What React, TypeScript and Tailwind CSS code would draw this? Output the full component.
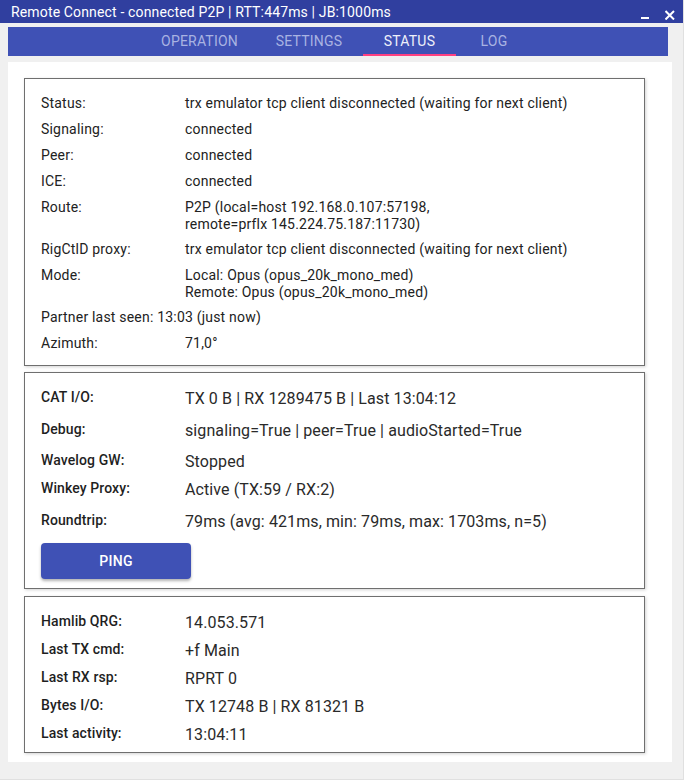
import React from "react";

const p1: { l: string; v: string[] }[] = [
  { l: "Status:", v: ["trx emulator tcp client disconnected (waiting for next client)"] },
  { l: "Signaling:", v: ["connected"] },
  { l: "Peer:", v: ["connected"] },
  { l: "ICE:", v: ["connected"] },
  { l: "Route:", v: ["P2P (local=host 192.168.0.107:57198,", "remote=prflx 145.224.75.187:11730)"] },
  { l: "RigCtlD proxy:", v: ["trx emulator tcp client disconnected (waiting for next client)"] },
  { l: "Mode:", v: ["Local: Opus (opus_20k_mono_med)", "Remote: Opus (opus_20k_mono_med)"] },
];

const p2: { l: string; v: string; h: string }[] = [
  { l: "CAT I/O:", v: "TX 0 B | RX 1289475 B | Last 13:04:12", h: "h-[32px]" },
  { l: "Debug:", v: "signaling=True | peer=True | audioStarted=True", h: "h-[31px]" },
  { l: "Wavelog GW:", v: "Stopped", h: "h-[28px]" },
  { l: "Winkey Proxy:", v: "Active (TX:59 / RX:2)", h: "h-[32px]" },
  { l: "Roundtrip:", v: "79ms (avg: 421ms, min: 79ms, max: 1703ms, n=5)", h: "h-[31px]" },
];

const p3: { l: string; v: string }[] = [
  { l: "Hamlib QRG:", v: "14.053.571" },
  { l: "Last TX cmd:", v: "+f Main" },
  { l: "Last RX rsp:", v: "RPRT 0" },
  { l: "Bytes I/O:", v: "TX 12748 B | RX 81321 B" },
  { l: "Last activity:", v: "13:04:11" },
];

const tabs = [
  { t: "OPERATION", w: "w-[111px]" },
  { t: "SETTINGS", w: "w-[108px]" },
  { t: "STATUS", w: "w-[93px]", active: true },
  { t: "LOG", w: "w-[76px]" },
];

export default function App() {
  return (
    <div className="w-[684px] h-[780px] bg-[#f0f0f0] flex flex-col overflow-hidden border-r border-b border-[#e0e0e0] font-['Roboto','Noto_Sans',sans-serif]">
      {/* Title bar */}
      <div className="h-[23px] bg-[#303f9f] flex items-center justify-between pl-[11px] pr-[8px] text-white shrink-0">
        <span className="text-[14px] tracking-[0.15px] leading-none">
          Remote Connect - connected P2P | RTT:447ms | JB:1000ms
        </span>
        <div className="flex items-center gap-[15px]">
          <svg width="9" height="16" viewBox="0 0 9 16">
            <rect x="0" y="13" width="8" height="2" fill="white" />
          </svg>
          <svg width="10" height="16" viewBox="0 0 10 16">
            <path d="M0.5 7.5 L9 16 M9 7.5 L0.5 16" transform="translate(0,-0.5)" stroke="white" strokeWidth="2" />
          </svg>
        </div>
      </div>

      {/* Tab bar */}
      <div className="mt-[4px] ml-[8px] w-[660px] h-[29px] bg-[#3f51b5] flex justify-center shrink-0">
        {tabs.map((t) => (
          <div
            key={t.t}
            className={`${t.w} h-full relative flex items-center justify-center text-[14px] tracking-[0.2px] ${
              t.active ? "text-[#eef0fa]" : "text-[#a9b3e2]"
            }`}
          >
            {t.t}
            {t.active && <div className="absolute left-0 right-0 bottom-0 h-[2px] bg-[#ff4081]" />}
          </div>
        ))}
      </div>

      {/* Content */}
      <div className="mt-[6px] ml-[8px] w-[664px] h-[700px] bg-white pt-[16px] pl-[16px] shrink-0">
        {/* Panel 1 */}
        <div className="w-[621px] h-[288px] border border-[#6f6f6f] shadow-[1px_1px_3px_rgba(0,0,0,0.18)] pt-[16px] pl-[16px] text-[14px] leading-[17px] tracking-[0.2px] text-[#222]">
          <div className="flex flex-col gap-[9px]">
            {p1.map((r) => (
              <div key={r.l} className="flex">
                <div className="w-[144px] shrink-0">{r.l}</div>
                <div className={`flex flex-col ${r.v.length > 1 ? "leading-[16.5px]" : ""}`}>
                  {r.v.map((x) => (
                    <span key={x}>{x}</span>
                  ))}
                </div>
              </div>
            ))}
            <div>Partner last seen: 13:03 (just now)</div>
            <div className="flex">
              <div className="w-[144px] shrink-0">Azimuth:</div>
              <div>71,0°</div>
            </div>
          </div>
        </div>

        {/* Panel 2 */}
        <div className="mt-[6px] w-[621px] h-[217px] border border-[#6f6f6f] shadow-[1px_1px_3px_rgba(0,0,0,0.18)] pt-[16px] pl-[16px] text-[#222]">
          {p2.map((r) => (
            <div key={r.l} className={`flex items-start ${r.h}`}>
              <div className="w-[144px] shrink-0 text-[14px] leading-[16px] font-medium tracking-[0.1px] text-[#1f1f1f]">
                {r.l}
              </div>
              <div className="text-[16px] leading-[19px] tracking-[0.1px] text-[#2a2a2a]">{r.v}</div>
            </div>
          ))}
          <button className="w-[150px] h-[36px] rounded-[4px] bg-[#3f51b5] text-white text-[14px] font-medium tracking-[0.3px] shadow-[0_2px_3px_rgba(0,0,0,0.3)] flex items-center justify-center">
            PING
          </button>
        </div>

        {/* Panel 3 */}
        <div className="mt-[7px] w-[621px] h-[157px] border border-[#6f6f6f] shadow-[1px_1px_3px_rgba(0,0,0,0.18)] pt-[16px] pl-[16px] text-[#222]">
          {p3.map((r) => (
            <div key={r.l} className="flex items-start h-[28px]">
              <div className="w-[144px] shrink-0 text-[14px] leading-[16px] font-medium tracking-[0.1px] text-[#1f1f1f]">
                {r.l}
              </div>
              <div className="text-[16px] leading-[19px] tracking-[0.1px] text-[#2a2a2a]">{r.v}</div>
            </div>
          ))}
        </div>
      </div>
    </div>
  );
}
